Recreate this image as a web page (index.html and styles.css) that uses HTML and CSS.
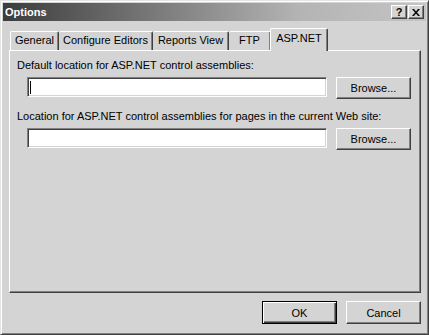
FILE: index.html
```html
<!DOCTYPE html>
<html lang="en">
<head>
	<meta charset="UTF-8">
	<title>Options</title>
	<link rel="stylesheet" href="styles.css">
</head>
<body>
	<div class="window">
		<div class="titlebar">
			<span class="title">Options</span>
			<div class="caption-btns">
				<span class="cbtn help">?</span>
				<span class="cbtn close"><svg width="8" height="7" viewBox="0 0 8 7"><path d="M0 0h2l2 2.5 2-2.5h2l-3 3.5 3 3.5h-2l-2-2.5-2 2.5h-2l3-3.5z" fill="#000"/></svg></span>
			</div>
		</div>

		<div class="tabs">
			<div class="tab t-general">General</div>
			<div class="tab t-editors">Configure Editors</div>
			<div class="tab t-reports">Reports View</div>
			<div class="tab t-ftp">FTP</div>
			<div class="tab t-asp active">ASP.NET</div>
		</div>

		<div class="panel">
			<div class="label">Default location for ASP.NET control assemblies:</div>
			<div class="row">
				<div class="field"><span class="caret"></span></div>
				<button class="btn">Browse...</button>
			</div>
			<div class="label second">Location for ASP.NET control assemblies for pages in the current Web site:</div>
			<div class="row">
				<div class="field"></div>
				<button class="btn">Browse...</button>
			</div>
		</div>

		<div class="footer">
			<button class="btn default">OK</button>
			<button class="btn">Cancel</button>
		</div>
	</div>
</body>
</html>
```

FILE: styles.css
```css
body{margin:0;background:#d4d4d4;font-family:"Liberation Sans",Arial,sans-serif;font-size:11px;color:#000;}

.window{width:429px;height:335px;box-sizing:border-box;display:flex;flex-direction:column;padding:2px;background:#d4d4d4;border:1px solid;border-color:#e4e4e4 #404040 #404040 #e4e4e4;box-shadow:inset 1px 1px #fff,inset -1px -1px #808080;}

/* caption */
.titlebar{height:18px;flex:none;display:flex;align-items:center;justify-content:space-between;padding:0 2px 0 2px;background:linear-gradient(to right,#3c3c3c,#b4b4b4 70%,#c4c4c4);}
.title{color:#fff;font-weight:bold;font-size:11px;}
.caption-btns{display:flex;gap:1px;}
.cbtn{width:16px;height:14px;box-sizing:border-box;display:flex;align-items:center;justify-content:center;background:#d4d4d4;border:1px solid;border-color:#fff #404040 #404040 #fff;box-shadow:inset -1px -1px #808080;font-weight:bold;font-size:11px;line-height:12px;}
.cbtn.close svg{display:block;}

/* tabs */
.tabs{flex:none;display:flex;align-items:flex-end;height:22px;margin-top:7px;padding-left:7px;position:relative;z-index:1;}
.tab{height:19px;box-sizing:border-box;text-align:center;line-height:17px;background:#d4d4d4;border-top:1px solid #fff;border-left:1px solid #fff;border-right:1px solid #404040;box-shadow:inset -1px 0 #808080;border-radius:2px 2px 0 0;}
.t-general{width:49px;}
.t-editors{width:94px;border-left:none;}
.t-reports{width:76px;border-left:none;}
.t-ftp{width:42px;border-left:none;}
.t-asp{width:58px;}
.tab.active{height:23px;margin:0 -2px -1px -1px;line-height:19px;}

/* page */
.panel{flex:1;margin:0 5px 0 6px;padding:8px 7px;background:#d4d4d4;border:1px solid;border-color:#fff #404040 #404040 #fff;box-shadow:inset -1px -1px #808080;}
.label{line-height:13px;}
.label.second{margin-top:11px;}
.row{display:flex;align-items:flex-start;gap:9px;margin-top:5px;padding-left:10px;}
.field{width:300px;height:20px;box-sizing:border-box;background:#fff;border:1px solid;border-color:#808080 #fff #fff #808080;box-shadow:inset 1px 1px #404040,inset -1px -1px #d4d4d4;padding:3px 0 0 2px;}
.caret{display:block;width:1px;height:13px;background:#000;}

.btn{width:75px;height:22px;box-sizing:border-box;padding:0;font-family:inherit;font-size:11px;color:#000;background:#d4d4d4;border:1px solid;border-color:#fff #404040 #404040 #fff;box-shadow:inset -1px -1px #808080;}

/* bottom buttons */
.footer{flex:none;display:flex;justify-content:flex-end;gap:9px;margin:8px 5px 0 0;padding-bottom:8px;}
.footer .btn{height:23px;}
.btn.default{border-color:#000;box-shadow:inset 1px 1px #fff,inset -1px -1px #404040,inset -2px -2px #808080;}
```
